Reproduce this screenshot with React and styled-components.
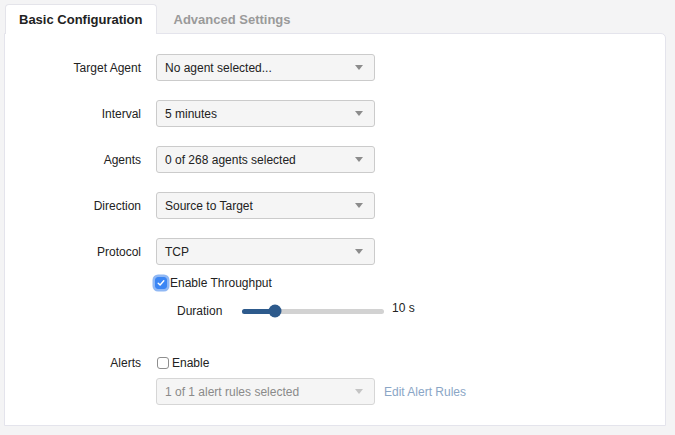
import React from 'react';
import styled, { createGlobalStyle } from 'styled-components';

const Global = createGlobalStyle`
  html, body { margin: 0; padding: 0; background: #f4f4f5; }
  body { font-family: "Liberation Sans", Arial, sans-serif; color: #222; }
`

const Page = styled.div`
  padding: 4px 9px 0 4px;
  width: 675px;
  height: 435px;
  box-sizing: border-box;
`

const Tabs = styled.div`
  display: flex;
  height: 29px;
  position: relative;
  z-index: 1;
`

const Tab = styled.div`
  box-sizing: border-box;
  height: ${p => p.active ? '30px' : '29px'};
  padding: 0 ${p => p.active ? '13px' : '15px'};
  margin-left: 1px;
  display: flex;
  align-items: center;
  font-size: 13px;
  font-weight: bold;
  color: ${p => p.active ? '#222' : '#9a9a9a'};
  background: ${p => p.active ? '#fff' : 'transparent'};
  border: 1px solid ${p => p.active ? '#e4e4ea' : 'transparent'};
  border-bottom: none;
  border-radius: 4px 4px 0 0;
`

const Panel = styled.div`
  background: #fff;
  border: 1px solid #e4e4ec;
  border-radius: 0 5px 0 0;
  height: 393px;
  box-sizing: border-box;
  padding-top: 20px;
`

const Row = styled.div`
  display: flex;
  align-items: center;
  gap: 15px;
  margin-bottom: ${p => p.mb ?? 19}px;
`

const Label = styled.div`
  width: 136px;
  flex: none;
  font-size: 12px;
  text-align: right;
  color: #222;
`

const Controls = styled.div`
  display: flex;
  align-items: center;
  gap: 9px;
`

const Select = styled.div`
  box-sizing: border-box;
  width: 219px;
  height: 27px;
  border: 1px solid ${p => p.disabled ? '#d6d6d6' : '#cbcbcb'};
  border-radius: 3px;
  background: #f5f5f5;
  display: flex;
  align-items: center;
  justify-content: space-between;
  padding: 0 11px 0 8px;
  font-size: 12px;
  color: ${p => p.disabled ? '#8a8a8a' : '#222'};
`

const Caret = styled.span`
  width: 0;
  height: 0;
  border-left: 4.5px solid transparent;
  border-right: 4.5px solid transparent;
  border-top: 5px solid ${p => p.disabled ? '#c4c4c4' : '#8c8c8c'};
`

const CheckRow = styled.label`
  display: flex;
  align-items: center;
  font-size: 12px;
  color: #222;
  gap: 3px;
  margin-left: ${p => p.ml ?? 0}px;
`

const Box = styled.span`
  box-sizing: border-box;
  width: 12px;
  height: 12px;
  border-radius: 3px;
  display: inline-flex;
  align-items: center;
  justify-content: center;
  background: ${p => p.checked ? '#3b86f4' : '#fff'};
  border: 1px solid ${p => p.checked ? '#3b86f4' : '#8e8e8e'};
  box-shadow: ${p => p.checked ? '0 0 0 2.5px #90b8f4' : 'none'};
`

const Duration = styled.div`
  display: flex;
  align-items: center;
  padding-left: 21px;
  font-size: 12px;
  margin-top: 14px;
`

const DurLabel = styled.span`
  width: 65px;
`

const Track = styled.div`
  position: relative;
  width: 142px;
  height: 5px;
  border-radius: 3px;
  background: #d2d2d2;
`

const Fill = styled.div`
  height: 100%;
  border-radius: 3px;
  background: #2d5a8c;
`

const Thumb = styled.div`
  position: absolute;
  top: 50%;
  width: 13px;
  height: 13px;
  border-radius: 50%;
  background: #2d5a8c;
  transform: translate(-50%, -50%);
`

const Value = styled.span`
  margin-left: 8px;
  margin-top: -7px;
`

const Link = styled.a`
  font-size: 12px;
  color: #8aa6c6;
  text-decoration: none;
`

function Dropdown({ text, disabled }) {
  return (
    <Select disabled={disabled}>
      <span>{text}</span>
      <Caret disabled={disabled} />
    </Select>
  )
}

const Check = () => (
  <svg width="8" height="8" viewBox="0 0 8 8">
    <path d="M1.2 4.2 L3.1 6 L6.8 1.8" fill="none" stroke="#fff" strokeWidth="1.4" strokeLinecap="round" strokeLinejoin="round" />
  </svg>
)

export default function App() {
  const pct = 23;
  return (
    <Page>
      <Global />
      <Tabs>
        <Tab active>Basic Configuration</Tab>
        <Tab>Advanced Settings</Tab>
      </Tabs>
      <Panel>
        <Row>
          <Label>Target Agent</Label>
          <Dropdown text="No agent selected..." />
        </Row>
        <Row>
          <Label>Interval</Label>
          <Dropdown text="5 minutes" />
        </Row>
        <Row>
          <Label>Agents</Label>
          <Dropdown text="0 of 268 agents selected" />
        </Row>
        <Row>
          <Label>Direction</Label>
          <Dropdown text="Source to Target" />
        </Row>
        <Row mb={11}>
          <Label>Protocol</Label>
          <Dropdown text="TCP" />
        </Row>
        <Row mb={38}>
          <Label />
          <div>
            <CheckRow ml={-1}>
              <Box checked><Check /></Box>
              Enable Throughput
            </CheckRow>
            <Duration>
              <DurLabel>Duration</DurLabel>
              <Track>
                <Fill style={{ width: `${pct}%` }} />
                <Thumb style={{ left: `${pct}%` }} />
              </Track>
              <Value>10 s</Value>
            </Duration>
          </div>
        </Row>
        <Row mb={8}>
          <Label>Alerts</Label>
          <CheckRow ml={1}>
            <Box />
            Enable
          </CheckRow>
        </Row>
        <Row mb={0}>
          <Label />
          <Controls>
            <Dropdown text="1 of 1 alert rules selected" disabled />
            <Link href="#">Edit Alert Rules</Link>
          </Controls>
        </Row>
      </Panel>
    </Page>
  )
}
